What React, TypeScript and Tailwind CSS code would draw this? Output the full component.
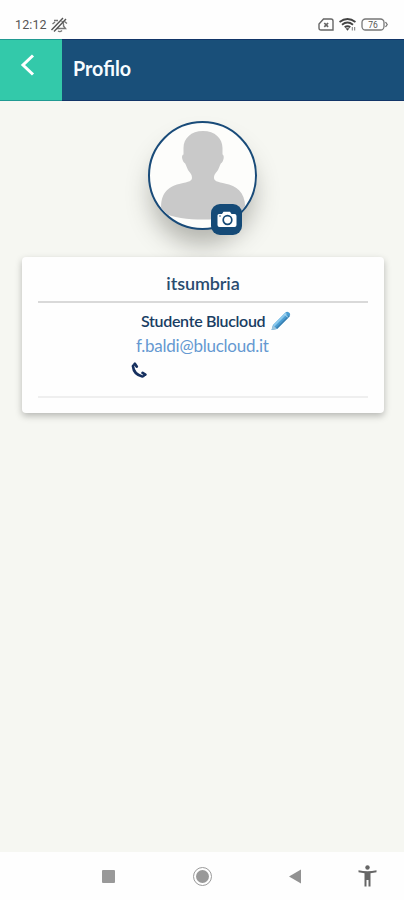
function StatusBar() {
  return (
    <div className="flex h-[39px] items-start bg-[#fefefe] pl-[15px] pr-[16px] pt-[16px] text-[#555]">
      <span className="font-[Roboto,sans-serif] w-[33px] text-[12.5px] leading-[18px] tracking-[0.1px] whitespace-nowrap">12:12</span>
      <svg className="ml-[2px] mt-px" width="18" height="16" viewBox="0 0 18 16" fill="none" stroke="#777" strokeWidth="1.4">
        <path d="M4 3.500H8M2.500 7 5 5M11.500 4Q14 5.500 13.500 9L15.500 11.500H7M8 14Q10 15.500 12 13.500M14.500 4.500 17 6.500" />
        <path d="M1.500 13 13 1M4 14.500 16 2" stroke="#555" />
      </svg>
      <div className="ml-auto flex items-start pt-[2px]">
        <svg width="16" height="13" viewBox="0 0 16 13" fill="none" stroke="#666" strokeWidth="1.4">
          <path d="M5.500 1H13Q15 1 15 3V12H3Q1 12 1 10V6Z" />
          <path d="m6.300 5 3.800 3.800M10.100 5 6.300 8.800" strokeWidth="1.700" />
        </svg>
        <svg className="ml-[5px]" width="17" height="13" viewBox="0 0 17 13" fill="none" stroke="#444" strokeWidth="1.9">
          <path d="M.5 4Q8.500-2 16.500 4M3 6.700Q8.500 2.500 14 6.700M5.700 9.300Q8.500 7 11.300 9.300" />
          <path d="m8.500 12.800-2-2.500h4z" fill="#444" stroke="none" />
          <path d="M13.300 9v3.500M15.700 9v3.500" strokeWidth="1" stroke="#777" />
        </svg>
        <svg className="ml-[5px]" width="27" height="13" viewBox="0 0 27 13" fill="none" stroke="#777" strokeWidth="1.300">
          <rect x="1" y="1" width="22" height="11" rx="3.500" />
          <path d="m24.500 4 1.700 2.500-1.700 2.500" />
          <text x="12" y="9.500" textAnchor="middle" fontFamily="Roboto" fontSize="8.500" fill="#555" stroke="none">76</text>
        </svg>
      </div>
    </div>
  )
}

function Header() {
  return (
    <header className="flex h-[62px] border-y border-[#123568] bg-[#194f79]">
      <button className="-my-px flex w-[62px] items-start border-y border-y-[#209a92] bg-[#33c9aa] pl-[20px] pt-[14px]" aria-label="Indietro">
        <svg width="15" height="22" viewBox="0 0 15 22" fill="none" stroke="white" strokeWidth="3">
          <path d="M13 1.500 3 11l10 9.500" />
        </svg>
      </button>
      <h1 className="ml-[11px] mt-[14px] origin-left scale-x-[0.960] text-[20.500px] font-bold leading-[28px] text-[#f7fcff]">Profilo</h1>
    </header>
  )
}

function Avatar() {
  return (
    <div className="relative ml-[148px] mt-[20px] size-[109px] rounded-full border-2 border-[#194b79] bg-[#fdfdfb] shadow-[0_18px_24px_-3px_rgba(65,65,55,0.36)]">
      <svg width="105" height="105" viewBox="0 0 105 105" className="rounded-full" fill="#c9c9c9">
        <path d="M53 8C41 8 33.500 15.500 33.500 25V31.500C31.500 32 31.500 36 34 39.500C36 40.500 36 43 38 47C40 50 42 51 42 55C42 59 36 59 27 61.500C16 65 9.500 73 11.500 89C23 95 38 96.500 53 96.500S83 95 95 89C96.500 73 90 65 79 61.500C70 59 64 59 64 55C64 51 66 50 68 47C70 43 70 40.500 72 39.500C74.500 36 74 32 72.500 31.500V25C72.500 15.500 65 8 53 8Z" />
      </svg>
      <button className="absolute left-[61px] top-[81px] flex h-[31px] w-[31px] items-center justify-center rounded-[9px] bg-[#154a77]" aria-label="Cambia foto">
        <svg width="20" height="17" viewBox="0 0 20 17">
          <path d="M2 3H5L6.500 .8H13L14.500 3H17.500Q19.500 3 19.500 5V14Q19.500 16 17.500 16H2.500Q.5 16 .5 14V4.500Q.5 3 2 3Z" fill="white" />
          <circle cx="10.500" cy="9" r="4.300" fill="none" stroke="#154a77" strokeWidth="1.700" />
          <circle cx="3" cy="5" r=".8" fill="#154a77" />
        </svg>
      </button>
    </div>
  )
}

function Pencil() {
  return (
    <svg width="20" height="20" viewBox="0 0 20 20">
      <path d="M.5 19 2 14 14.500 1.500Q16 0 18 1.500T18.500 5.500L6 18Z" fill="#4b9dd2" />
      <path d="M2 14 14.500 1.500 16 3 3.500 15.500Z" fill="#8bc9ed" />
      <path d="M5 17 17.500 4.500 18.500 5.500 6 18Z" fill="#397eaf" />
      <path d="M.5 19 2 14 6 18Z" fill="#9bc4dd" />
      <path d="m13.500 3 3.500 3.500" stroke="#b4def2" />
    </svg>
  )
}

function ProfileCard() {
  return (
    <section className="relative ml-[22px] mt-[27px] h-[156px] w-[362px] rounded-[4px] bg-[#fefefe] px-4 shadow-[0_3px_7px_rgba(0,0,0,0.26)]">
      <h2 className="flex h-[46px] items-center justify-center border-b-2 border-[#d9d9d9] pt-[7px] text-[18px] font-semibold leading-[24px] tracking-[-0.100px] text-[#294c70]">itsumbria</h2>
      <div className="flex h-[30px] items-center pl-[103px] pt-[5px] text-[#193d63]">
        <span className="w-[130px] whitespace-nowrap text-[16px] font-semibold leading-[20px] tracking-[-0.320px]">Studente Blucloud</span>
        <Pencil />
      </div>
      <p className="-mt-px pl-[98px] text-[17px] leading-[27px] tracking-[-0.250px] text-[#6599d1]">f.baldi@blucloud.it</p>
      <div className="h-[39px] border-b-2 border-[#efefef] pl-[93px] pt-[3px]">
        <svg width="17" height="17" viewBox="0 0 17 17" fill="none" stroke="#16305f" strokeLinecap="round">
          <path d="M1.900 4Q2.800 12.500 11.300 14.400" strokeWidth="2.600" />
          <path d="M3.800 1.800 5.700 4.500M11.600 10.900 14.300 12.600" strokeWidth="2.800" />
          <path d="M2.200 3.300 4.200 2.200M12.500 14.300 14 12.800" strokeWidth="2" />
        </svg>
      </div>
    </section>
  )
}

function NavigationBar() {
  return (
    <nav className="mt-auto flex h-[48px] items-center bg-[#fefefe] pl-[102px]">
      <div className="size-[13px] rounded-[1px] bg-[#999]" />
      <div className="ml-[78px] flex size-[19px] items-center justify-center rounded-full border-[1.500px] border-[#9b9b9b]">
        <div className="size-[13px] rounded-full bg-[#999]" />
      </div>
      <svg className="ml-[77px]" width="13" height="15" viewBox="0 0 13 15" fill="#929292"><path d="m0 7.500 12-7v14z" /></svg>
      <svg className="ml-[56px]" width="19" height="22" viewBox="0 0 19 22" fill="#666">
        <circle cx="9.500" cy="2.500" r="2.200" />
        <path d="M.5 5.200Q9.500 7.300 18.500 5.200V7.200L12.500 8.200V21.500H10.500V15H8.500V21.500H6.500V8.200L.5 7.200Z" />
      </svg>
    </nav>
  )
}

export default function App() {
  return (
    <main className="flex h-[900px] w-[404px] flex-col overflow-hidden bg-[#f6f7f2] font-[Lato,sans-serif]">
      <StatusBar />
      <Header />
      <Avatar />
      <ProfileCard />
      <NavigationBar />
    </main>
  )
}
